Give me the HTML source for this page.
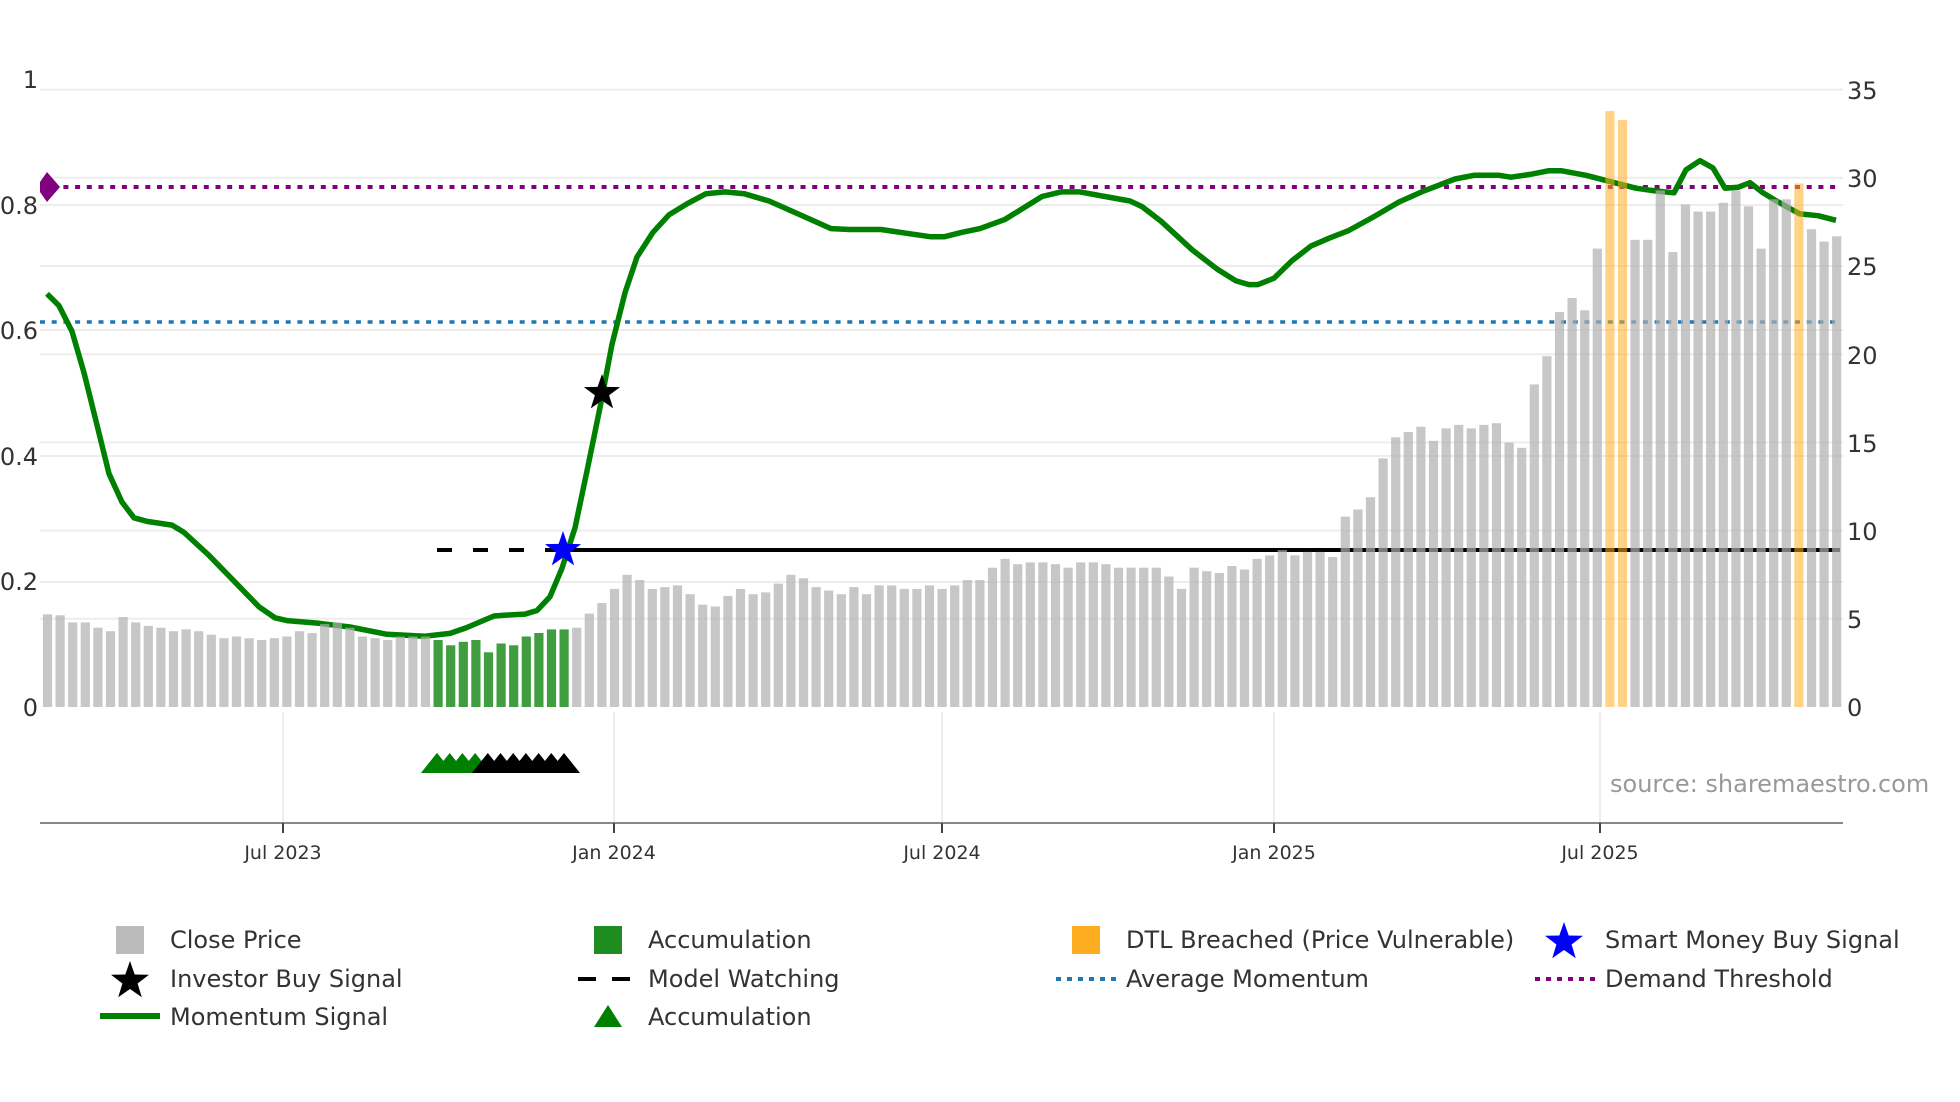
<!DOCTYPE html>
<html><head><meta charset="utf-8"><style>
html,body{margin:0;padding:0;background:#fff;}
svg{display:block;font-family:"DejaVu Sans","Liberation Sans",sans-serif;}
</style></head><body>
<svg id="s" width="1960" height="1102" viewBox="0 0 1960 1102" xmlns="http://www.w3.org/2000/svg">
<g id="grid" stroke="#ededed" stroke-width="2"></g>
<g id="lines"></g>
<g id="bars"></g>
<g id="top"></g>
<g fill="#333" font-size="24" text-anchor="end">
<text x="38" y="88">1</text><text x="38" y="214">0.8</text><text x="38" y="339">0.6</text>
<text x="38" y="465">0.4</text><text x="38" y="590">0.2</text><text x="38" y="716">0</text>
</g>
<g fill="#333" font-size="24">
<text x="1847" y="99">35</text><text x="1847" y="187">30</text><text x="1847" y="275">25</text>
<text x="1847" y="364">20</text><text x="1847" y="452">15</text><text x="1847" y="540">10</text>
<text x="1847" y="628">5</text><text x="1847" y="716">0</text>
</g>
<line x1="40" y1="823" x2="1843" y2="823" stroke="#888" stroke-width="2"/>
<g stroke="#ededed" stroke-width="2">
<line x1="283" y1="712" x2="283" y2="822"/><line x1="614" y1="712" x2="614" y2="822"/>
<line x1="942" y1="712" x2="942" y2="822"/><line x1="1274" y1="712" x2="1274" y2="822"/>
<line x1="1600" y1="712" x2="1600" y2="822"/>
</g>
<g stroke="#444" stroke-width="2">
<line x1="283" y1="823" x2="283" y2="833"/><line x1="614" y1="823" x2="614" y2="833"/>
<line x1="942" y1="823" x2="942" y2="833"/><line x1="1274" y1="823" x2="1274" y2="833"/>
<line x1="1600" y1="823" x2="1600" y2="833"/>
</g>
<g fill="#333" font-size="19" text-anchor="middle">
<text x="283" y="859">Jul 2023</text><text x="614" y="859">Jan 2024</text><text x="942" y="859">Jul 2024</text>
<text x="1274" y="859">Jan 2025</text><text x="1600" y="859">Jul 2025</text>
</g>
<text x="1610" y="792" fill="#999" font-size="24">source: sharemaestro.com</text>
<g font-size="24" fill="#333">
<rect x="116" y="926" width="28" height="28" fill="#bbb"/>
<text x="170" y="948">Close Price</text>
<rect x="594" y="926" width="28" height="28" fill="#1e8c1e"/>
<text x="648" y="948">Accumulation</text>
<rect x="1072" y="926" width="28" height="28" fill="#ffad20"/>
<text x="1126" y="948">DTL Breached (Price Vulnerable)</text>
<text x="1605" y="948">Smart Money Buy Signal</text>
<text x="170" y="987">Investor Buy Signal</text>
<line x1="578" y1="979" x2="596" y2="979" stroke="#000" stroke-width="4"/>
<line x1="612" y1="979" x2="630" y2="979" stroke="#000" stroke-width="4"/>
<text x="648" y="987">Model Watching</text>
<line x1="1056" y1="979" x2="1116" y2="979" stroke="#1f77b4" stroke-width="4" stroke-dasharray="5 6"/>
<text x="1126" y="987">Average Momentum</text>
<line x1="1535" y1="979" x2="1595" y2="979" stroke="#800080" stroke-width="4" stroke-dasharray="5 6"/>
<text x="1605" y="987">Demand Threshold</text>
<line x1="100" y1="1016" x2="160" y2="1016" stroke="#008000" stroke-width="6"/>
<text x="170" y="1025">Momentum Signal</text>
<polygon points="594,1027 608,1005 622,1027" fill="#008000"/>
<text x="648" y="1025">Accumulation</text>
</g>
<g id="legstars"></g>
</svg>
<script>
var NS="http://www.w3.org/2000/svg";
function el(p,t,a){var e=document.createElementNS(NS,t);for(var k in a)e.setAttribute(k,a[k]);document.getElementById(p).appendChild(e);return e;}
function star(cx,cy,R,r){var p=[];for(var i=0;i<10;i++){var ang=-Math.PI/2+i*Math.PI/5;var rr=i%2?r:R;p.push((cx+rr*Math.cos(ang)).toFixed(1)+","+(cy+rr*Math.sin(ang)).toFixed(1));}return p.join(" ");}
[205,330,456,582].forEach(function(y){el("grid","line",{x1:40,x2:1843,y1:y,y2:y});});
for(var k=1;k<8;k++){var y=707-88.2*k;el("grid","line",{x1:40,x2:1843,y1:y,y2:y});}
el("lines","line",{x1:40,x2:1840,y1:187,y2:187,stroke:"#800080","stroke-width":4,"stroke-dasharray":"5 6.7"});
el("lines","line",{x1:40,x2:1840,y1:322,y2:322,stroke:"#1f77b4","stroke-width":3.5,"stroke-dasharray":"5 6.7"});
el("lines","line",{x1:437,x2:564,y1:550,y2:550,stroke:"#000","stroke-width":4,"stroke-dasharray":"15 21"});
el("lines","line",{x1:564,x2:1840,y1:550,y2:550,stroke:"#000","stroke-width":4});
var pts=[[47,320],[59,333],[72,361],[84,406],[97,463],[109,516],[122,547],[134,564],[147,568],[172,572],[184,580],[209,605],[234,633],[259,661],[275,673],[287,676],[319,679],[350,683],[387,691],[425,693],[450,690],[466,684],[494,671],[506,670],[525,669],[537,665],[550,650],[562,619],[575,575],[587,513],[600,444],[612,375],[625,319],[637,280],[653,253],[669,234],[687,222],[706,211],[725,209],[744,211],[769,219],[800,234],[831,249],[850,250],[881,250],[906,254],[931,258],[944,258],[962,253],[980,249],[1005,239],[1042,214],[1061,209],[1080,209],[1105,214],[1130,219],[1142,225],[1161,241],[1192,272],[1217,293],[1236,306],[1249,310],[1258,310],[1274,303],[1292,284],[1311,268],[1330,259],[1349,251],[1374,236],[1399,220],[1424,208],[1455,195],[1474,191],[1499,191],[1511,193],[1530,190],[1549,186],[1561,186],[1586,191],[1611,198],[1636,205],[1655,208],[1674,210],[1686,185],[1700,175],[1713,183],[1725,205],[1738,204],[1750,199],[1763,210],[1775,218],[1788,226],[1800,233],[1818,235],[1836,240]];
var d="M"+pts.map(function(p){return p[0]+","+(p[1]*0.918).toFixed(1);}).join(" L");
el("lines","path",{d:d,fill:"none",stroke:"#008000","stroke-width":5.5,"stroke-linejoin":"round"});
var P=[5.26,5.2,4.8,4.8,4.5,4.3,5.1,4.8,4.6,4.5,4.3,4.4,4.3,4.1,3.9,4.0,3.9,3.8,3.9,4.0,4.3,4.2,4.7,4.8,4.5,4.0,3.9,3.8,4.0,4.0,4.0,
3.8,3.5,3.7,3.8,3.1,3.6,3.5,4.0,4.2,4.4,4.4,
4.5,5.3,5.9,6.7,7.5,7.2,6.7,6.8,6.9,6.4,5.8,5.7,6.3,6.7,6.4,6.5,7.0,7.5,7.3,6.8,6.6,6.4,6.8,6.4,6.9,6.9,6.7,6.7,6.9,6.7,6.9,7.2,
7.2,7.9,8.4,8.1,8.2,8.2,8.1,7.9,8.2,8.2,8.1,7.9,7.9,7.9,7.9,7.4,6.7,7.9,7.7,7.6,8.0,7.8,8.4,8.6,8.9,8.6,8.8,8.8,8.5,10.8,11.2,11.9,14.1,15.3,15.6,15.9,15.1,15.8,16.0,15.8,16.0,16.1,15.0,14.7,18.3,19.9,22.4,23.2,22.5,26.0,
33.8,33.3,26.5,26.5,29.3,25.8,28.5,28.1,28.1,28.6,29.3,28.4,26.0,28.8,28.8,29.7,27.1,26.4,26.7];
for(var i=0;i<P.length;i++){
 var cx=47.5+i*12.6, h=P[i]*17.63, fill="rgba(175,175,175,0.7)";
 if(i>=31&&i<=41) fill="rgba(30,140,30,0.85)";
 if(i==124||i==125||i==139) fill="rgba(255,173,32,0.55)";
 el("bars","rect",{x:(cx-4.6).toFixed(1),y:(707-h).toFixed(1),width:9.2,height:h.toFixed(1),fill:fill});
}
el("top","polygon",{points:"47,172 60,187 47,202 40,192 40,182",fill:"#800080"});
for(var j=0;j<11;j++){var cx=437+j*12.7;el("top","polygon",{points:(cx-16)+",773 "+cx+",753 "+(cx+16)+",773",fill:j<4?"#008000":"#000"});}
el("top","polygon",{points:(437-16)+",773 "+437+",753 "+(437+16)+",773",fill:"#008000"});
el("top","polygon",{points:star(563,550,19,7.5),fill:"#0000ff"});
el("top","polygon",{points:star(602,393,19,7.5),fill:"#000"});
el("legstars","polygon",{points:star(130,981,20,8),fill:"#000"});
el("legstars","polygon",{points:star(1564,942,20,8),fill:"#0000ff"});
</script>
</body></html>
